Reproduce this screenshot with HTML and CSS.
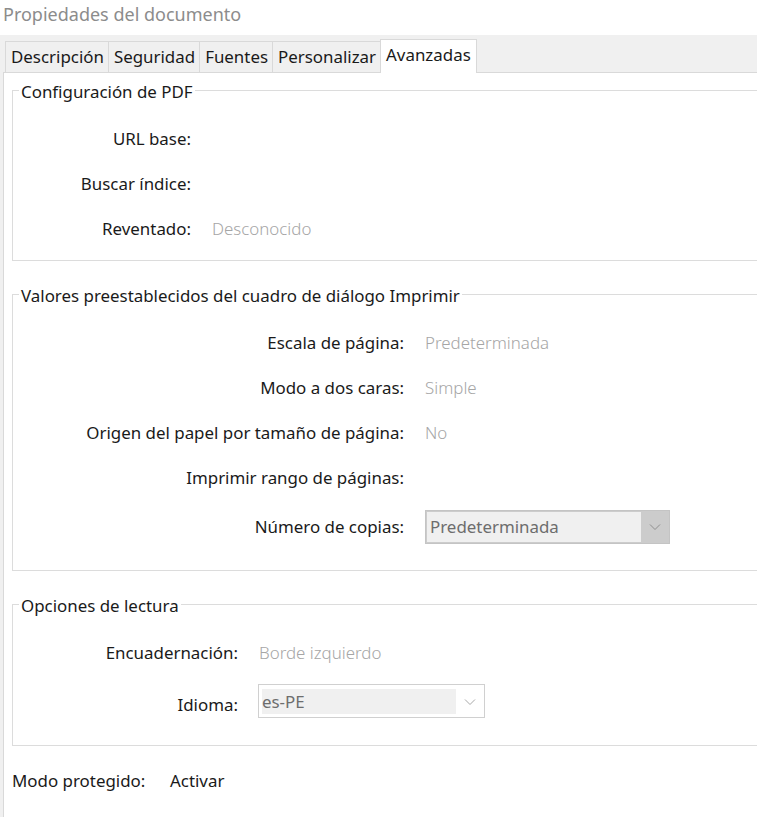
FILE: index.html
```html
<!DOCTYPE html>
<html lang="es">
<head>
<meta charset="utf-8">
<title>Propiedades del documento</title>
<link rel="stylesheet" href="styles.css">
</head>
<body>
<div class="window">
  <div class="title">Propiedades del documento</div>
  <div class="tabstrip">
    <div class="tab">Descripción</div>
    <div class="tab">Seguridad</div>
    <div class="tab">Fuentes</div>
    <div class="tab">Personalizar</div>
    <div class="tab active">Avanzadas</div>
  </div>
  <div class="panel">
    <fieldset class="group g1">
      <legend>Configuración de PDF</legend>
      <div class="form">
        <div class="row"><span class="label">URL base:</span><span class="value"></span></div>
        <div class="row"><span class="label">Buscar índice:</span><span class="value"></span></div>
        <div class="row"><span class="label">Reventado:</span><span class="value">Desconocido</span></div>
      </div>
    </fieldset>

    <fieldset class="group g2">
      <legend>Valores preestablecidos del cuadro de diálogo Imprimir</legend>
      <div class="form">
        <div class="row"><span class="label">Escala de página:</span><span class="value">Predeterminada</span></div>
        <div class="row"><span class="label">Modo a dos caras:</span><span class="value">Simple</span></div>
        <div class="row"><span class="label">Origen del papel por tamaño de página:</span><span class="value">No</span></div>
        <div class="row"><span class="label">Imprimir rango de páginas:</span><span class="value"></span></div>
        <div class="row row-combo">
          <span class="label">Número de copias:</span>
          <div class="combo combo-disabled">
            <span class="combo-text">Predeterminada</span>
            <span class="combo-arrow"><svg width="12" height="8" viewBox="0 0 12 8"><path d="M1 1.5 L6 6.5 L11 1.5" fill="none" stroke="#8f8f8f" stroke-width="1"/></svg></span>
          </div>
        </div>
      </div>
    </fieldset>

    <fieldset class="group g3">
      <legend>Opciones de lectura</legend>
      <div class="form">
        <div class="row"><span class="label">Encuadernación:</span><span class="value">Borde izquierdo</span></div>
        <div class="row row-combo2">
          <span class="label">Idioma:</span>
          <div class="combo combo-lang">
            <span class="combo-text">es-PE</span>
            <span class="combo-arrow"><svg width="12" height="8" viewBox="0 0 12 8"><path d="M1 1.5 L6 6.5 L11 1.5" fill="none" stroke="#a8a8a8" stroke-width="1"/></svg></span>
          </div>
        </div>
      </div>
    </fieldset>

    <div class="protected">
      <span class="plabel">Modo protegido:</span>
      <span class="pvalue">Activar</span>
    </div>
  </div>
</div>
</body>
</html>
```

FILE: styles.css
```css
html, body {
  margin: 0;
  padding: 0;
  background: #ffffff;
}
body {
  width: 757px;
  height: 817px;
  overflow: hidden;
  font-family: "Noto Sans", "Open Sans", sans-serif;
  font-size: 16.9px;
  color: #1a1a1a;
}
.window {
  width: 757px;
  height: 817px;
  display: flex;
  flex-direction: column;
  background: #f0f0f0;
}
.title {
  height: 35px;
  line-height: 28px;
  padding-left: 3px;
  background: #ffffff;
  color: #8c8c8c;
  font-size: 18px;
}
.tabstrip {
  height: 37px;
  display: flex;
  align-items: flex-end;
  padding-left: 5px;
  background: #f0f0f0;
  position: relative;
  z-index: 1;
}
.tab {
  box-sizing: border-box;
  height: 31px;
  line-height: 29px;
  padding: 0 4px 0 5px;
  border: 1px solid #d9d9d9;
  border-bottom: none;
  border-right: none;
  background: #f0f0f0;
  white-space: nowrap;
}
.tab.active {
  height: 34px;
  line-height: 30px;
  margin-bottom: -1px;
  padding: 0 5px 0 5px;
  background: #ffffff;
  border-right: 1px solid #d9d9d9;
}
.panel {
  flex: 1;
  margin-left: 3px;
  background: #ffffff;
  border-top: 1px solid #d9d9d9;
  border-left: 1px solid #d9d9d9;
  padding-left: 8px;
  display: flex;
  flex-direction: column;
}
.group {
  margin: 0;
  margin-right: -20px;
  padding: 0;
  border: 1px solid #dcdcdc;
  min-width: 0;
}
.group legend {
  padding: 6px 2px 2px 2px;
  margin-left: 6px;
  line-height: 22px;
}
.g1 { margin-top: 2px; padding: 11px 0 9px 0; }
.g2 { margin-top: 18px; padding: 11px 0 17px 0; }
.g3 { margin-top: 18px; padding: 11px 0 10px 0; }
.form {
  display: grid;
  column-gap: 21px;
  align-items: center;
}
.g1 .form { grid-template-columns: 178px 1fr; }
.g2 .form { grid-template-columns: 391px 1fr; }
.g3 .form { grid-template-columns: 225px 1fr; }
.row {
  display: contents;
}
.label {
  height: 45px;
  line-height: 45px;
  text-align: right;
  white-space: nowrap;
}
.value {
  height: 45px;
  line-height: 45px;
  color: #a6a6a6;
  font-weight: 300;
  white-space: nowrap;
}
.row-combo .label {
  height: 53px;
  line-height: 53px;
}
.row-combo2 .label {
  height: 60px;
  line-height: 60px;
}
.combo {
  box-sizing: border-box;
  display: flex;
  align-items: center;
}
.combo-disabled {
  width: 245px;
  height: 34px;
  background: #cccccc;
  border: 1px solid #c4c4c4;
  padding: 1px;
}
.combo-disabled .combo-text {
  flex: none;
  width: 214px;
  height: 100%;
  background: #f0f0f0;
  color: #6d6d6d;
  line-height: 30px;
  padding-left: 3px;
  box-sizing: border-box;
}
.combo-arrow {
  flex: 1;
  display: flex;
  justify-content: center;
  align-items: center;
}
.combo-lang {
  width: 227px;
  height: 34px;
  margin-left: -1px;
  margin-top: -8px;
  background: #ffffff;
  border: 1px solid #d0d0d0;
  padding: 4px 0 3px 3px;
}
.combo-lang .combo-text {
  flex: none;
  width: 194px;
  height: 100%;
  background: #f0f0f0;
  color: #6d6d6d;
  line-height: 26px;
  padding-left: 0;
  box-sizing: border-box;
}
.protected {
  display: flex;
  height: 70px;
  align-items: center;
  padding-bottom: 2px;
  box-sizing: border-box;
}
.plabel {
  width: 158px;
}
.pvalue {
  color: #1a1a1a;
}
```
